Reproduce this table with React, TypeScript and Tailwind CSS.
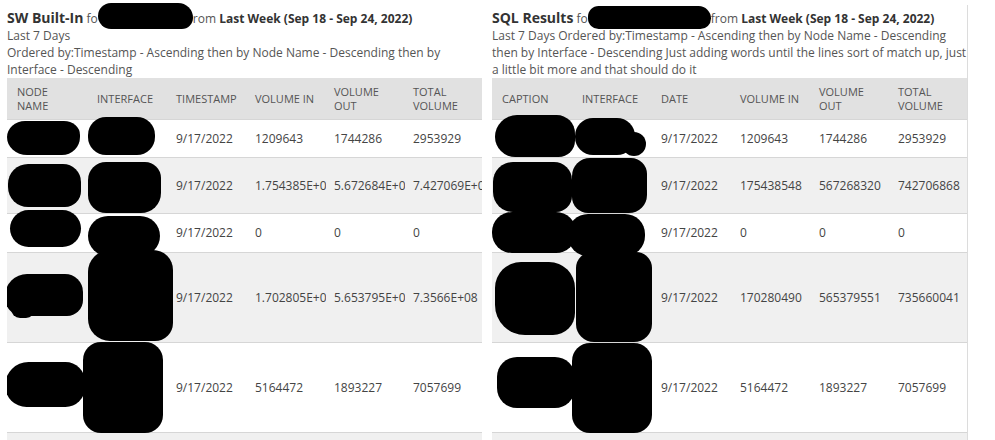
import React from "react";

type Row = { h: number; vals: string[] };
type Blob = [number, number, number, number, string];

const leftRows: Row[] = [
  { h: 38, vals: ["9/17/2022", "1209643", "1744286", "2953929"] },
  { h: 56, vals: ["9/17/2022", "1.754385E+08", "5.672684E+08", "7.427069E+08"] },
  { h: 39, vals: ["9/17/2022", "0", "0", "0"] },
  { h: 90, vals: ["9/17/2022", "1.702805E+08", "5.653795E+08", "7.3566E+08"] },
  { h: 90, vals: ["9/17/2022", "5164472", "1893227", "7057699"] },
];

const rightRows: Row[] = [
  { h: 38, vals: ["9/17/2022", "1209643", "1744286", "2953929"] },
  { h: 56, vals: ["9/17/2022", "175438548", "567268320", "742706868"] },
  { h: 39, vals: ["9/17/2022", "0", "0", "0"] },
  { h: 90, vals: ["9/17/2022", "170280490", "565379551", "735660041"] },
  { h: 90, vals: ["9/17/2022", "5164472", "1893227", "7057699"] },
];

// [left, top, width, height, borderRadius] relative to table body
const leftBlobs: Blob[] = [
  [0, 1, 73, 34, "18px 16px 18px 20px / 16px 14px 18px 18px"],
  [81, -3, 67, 38, "18px"],
  [1, 44, 73, 43, "20px 18px 16px 20px"],
  [81, 42, 73, 51, "18px 16px 20px 18px"],
  [3, 90, 71, 37, "20px"],
  [81, 96, 72, 40, "20px"],
  [-2, 154, 78, 42, "22px 18px 16px 18px"],
  [4, 180, 24, 18, "10px"],
  [81, 130, 85, 91, "22px 20px 18px 22px"],
  [-2, 242, 80, 45, "24px 20px 20px 22px"],
  [76, 222, 80, 91, "18px"],
];

const rightBlobs: Blob[] = [
  [3, -5, 80, 42, "24px 20px 18px 22px"],
  [83, -2, 60, 37, "18px"],
  [130, 12, 24, 24, "12px"],
  [1, 42, 79, 50, "20px 18px 16px 20px"],
  [80, 38, 75, 55, "18px 16px 18px 16px"],
  [0, 92, 84, 41, "20px"],
  [76, 94, 77, 42, "20px"],
  [3, 142, 80, 73, "26px 26px 22px 30px"],
  [84, 132, 76, 90, "16px 16px 18px 18px"],
  [5, 237, 78, 51, "20px"],
  [80, 223, 80, 90, "18px"],
];

const leftHeaders = [["NODE", "NAME"], ["INTERFACE"], ["TIMESTAMP"], ["VOLUME IN"], ["VOLUME", "OUT"], ["TOTAL", "VOLUME"]];
const rightHeaders = [["CAPTION"], ["INTERFACE"], ["DATE"], ["VOLUME IN"], ["VOLUME", "OUT"], ["TOTAL", "VOLUME"]];

function Table({ headers, rows, blobs }: { headers: string[][]; rows: Row[]; blobs: Blob[] }) {
  return (
    <div className="w-[475px] overflow-hidden">
      <div className="grid grid-cols-[80px_79px_79px_79px_79px_79px] h-[42px] bg-[#e1e1e1] border-b border-[#d6d6d6] text-[11px] leading-[14px] text-[#555]">
        {headers.map((h, i) => (
          <div key={i} className="flex flex-col justify-center pl-[10px] whitespace-nowrap">
            {h.map((l, j) => (
              <span key={j}>{l}</span>
            ))}
          </div>
        ))}
      </div>
      <div className="relative">
        {rows.map((r, i) => (
          <div
            key={i}
            style={{ height: r.h }}
            className={`grid grid-cols-[80px_79px_79px_79px_79px_79px] items-center border-b border-[#d6d6d6] text-[12px] text-[#444] ${i % 2 === 1 ? "bg-[#f0f0f0]" : "bg-white"}`}
          >
            <div className="pl-[10px]" />
            <div className="pl-[10px]" />
            {r.vals.map((v, j) => (
              <div key={j} className="pl-[10px] whitespace-nowrap">
                <div className="w-[71px] overflow-hidden">{v}</div>
              </div>
            ))}
          </div>
        ))}
        <div className="h-[20px] bg-[#f0f0f0]" />
        {blobs.map(([x, y, w, h, r], i) => (
          <div
            key={i}
            className="absolute bg-black z-10"
            style={{ left: x, top: y, width: w, height: h, borderRadius: r }}
          />
        ))}
      </div>
    </div>
  );
}

export default function App() {
  return (
    <div className="w-[995px] h-[440px] overflow-hidden bg-white font-['Open_Sans',sans-serif] flex items-start">
      <div className="w-[487px] pl-[7px] pr-[5px] pt-[8px]">
        <div className="h-[19px] leading-[19px] text-[12px] text-[#555] whitespace-nowrap">
          <span className="text-[14px] font-bold text-[#333]">SW Built-In</span> fo
          <span className="inline-block w-[95px] h-[26px] -mt-[20px] -mb-[6px] bg-black rounded-[14px_16px_12px_14px] align-baseline" />
          rom <span className="font-bold text-[#333]">Last Week (Sep 18 - Sep 24, 2022)</span>
        </div>
        <div className="text-[12px] leading-[17px] text-[#555]">
          <div>Last 7 Days</div>
          <div>Ordered by:Timestamp - Ascending then by Node Name - Descending then by</div>
          <div>Interface - Descending</div>
        </div>
        <Table headers={leftHeaders} rows={leftRows} blobs={leftBlobs} />
      </div>
      <div className="w-[481px] mt-[5px] pl-[5px] pt-[3px] border-r border-[#dcdcdc] h-[435px]">
        <div className="h-[19px] leading-[19px] text-[12px] text-[#555] whitespace-nowrap">
          <span className="text-[14px] font-bold text-[#333]">SQL Results</span> fo
          <span className="inline-block w-[123px] h-[23px] -mt-[17px] -mb-[6px] bg-black rounded-[12px_14px_12px_12px] align-baseline" />
          from <span className="font-bold text-[#333]">Last Week (Sep 18 - Sep 24, 2022)</span>
        </div>
        <div className="text-[12px] leading-[17px] text-[#555] whitespace-nowrap">
          <div>Last 7 Days Ordered by:Timestamp - Ascending then by Node Name - Descending</div>
          <div>then by Interface - Descending Just adding words until the lines sort of match up, just</div>
          <div>a little bit more and that should do it</div>
        </div>
        <Table headers={rightHeaders} rows={rightRows} blobs={rightBlobs} />
      </div>
    </div>
  );
}
